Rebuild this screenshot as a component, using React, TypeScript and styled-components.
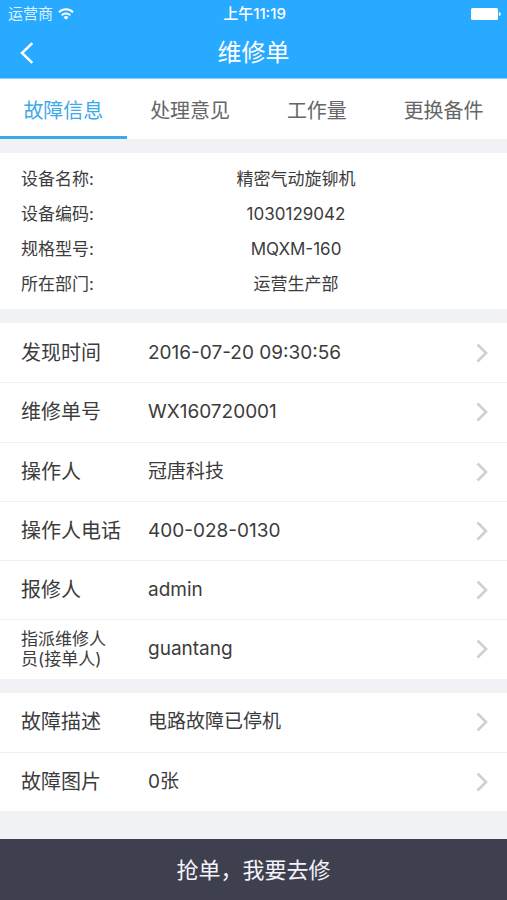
import React, { useState } from "react";
import styled, { createGlobalStyle } from "styled-components";

const GlobalStyle = createGlobalStyle`
  * { box-sizing: border-box; }
  body {
    margin: 0;
    background: #f0f2f5;
    color: #3c3c3c;
    font-family: Inter, "Noto Sans CJK SC", sans-serif;
  }
  button {
    margin: 0;
    padding: 0;
    border: 0;
    background: none;
    color: inherit;
    font: inherit;
    text-align: left;
    cursor: pointer;
  }
`;

const Page = styled.div`
  display: flex;
  flex-direction: column;
  gap: 14px;
  min-height: 100vh;
`;

const Top = styled.div``;

const Header = styled.header`
  background: #27aaff;
  color: #fff;
  border-bottom: 1px solid #7fd3ff;
`;

const StatusBar = styled.div`
  display: grid;
  grid-template-columns: 1fr auto 1fr;
  align-items: center;
  height: 28px;
  padding: 0 6px 0 8px;
  font-size: 15px;
  line-height: 20px;
`;

const Carrier = styled.div`
  display: flex;
  align-items: center;
  gap: 5px;
  color: #dff2ff;
`;

const Clock = styled.time`
  font-weight: 500;
`;

const Battery = styled.svg`
  justify-self: end;
`;

const NavBar = styled.div`
  display: grid;
  grid-template-columns: 60px 1fr 60px;
  align-items: center;
  height: 50px;
`;

const BackButton = styled.button`
  display: flex;
  align-items: center;
  height: 48px;
  padding-left: 20px;
`;

const Title = styled.h1`
  margin: 0;
  font-size: 24px;
  line-height: 48px;
  font-weight: 400;
  text-align: center;
`;

const Tabs = styled.div`
  display: grid;
  grid-template-columns: repeat(4, 1fr);
  background: #fff;
`;

const Tab = styled.button<{ $active: boolean }>`
  height: 60px;
  padding-top: 4px;
  border-bottom: 3px solid ${(p) => (p.$active ? "#3ba9ea" : "transparent")};
  color: ${(p) => (p.$active ? "#3ba9ea" : "#666")};
  font-size: 20px;
  text-align: center;
`;

const Info = styled.dl`
  margin: 0;
  padding: 9px 20px 7px 21px;
  background: #fff;
  font-size: 17px;
  line-height: 35px;
`;

const InfoRow = styled.div`
  display: grid;
  grid-template-columns: 84px 1fr;
`;

const InfoLabel = styled.dt`
  white-space: nowrap;
`;

const InfoValue = styled.dd`
  margin: 0;
  text-align: center;
`;

const List = styled.ul<{ $rows: number }>`
  display: flex;
  flex: ${(p) => p.$rows} 0 auto;
  flex-direction: column;
  margin: 0;
  padding: 0;
  background: #fff;
  list-style: none;
`;

const Item = styled.li`
  display: flex;
  flex: 1 0 56px;

  & + & {
    border-top: 1px solid #eeeff0;
  }
`;

const ItemButton = styled.button`
  display: grid;
  grid-template-columns: 115px 1fr 12px;
  column-gap: 12px;
  align-items: center;
  width: 100%;
  padding: 0 19px 0 21px;
`;

const ItemLabel = styled.span<{ $small?: boolean }>`
  max-width: ${(p) => (p.$small ? "90px" : "none")};
  font-size: ${(p) => (p.$small ? "17px" : "20px")};
  line-height: 20px;
`;

const ItemValue = styled.span`
  font-size: 19px;
  line-height: 24px;
`;

const Footer = styled.footer`
  margin-top: 14px;
`;

const GrabButton = styled.button`
  display: block;
  width: 100%;
  height: 61px;
  padding-bottom: 4px;
  background: #3f404f;
  color: #f3f3fb;
  font-size: 22px;
  text-align: center;
`;

const tabs = ["故障信息", "处理意见", "工作量", "更换备件"];

const device = [
  ["设备名称:", "精密气动旋铆机"],
  ["设备编码:", "1030129042"],
  ["规格型号:", "MQXM-160"],
  ["所在部门:", "运营生产部"],
];

type Field = { label: string; value: string; small?: boolean };

const orderFields: Field[] = [
  { label: "发现时间", value: "2016-07-20 09:30:56" },
  { label: "维修单号", value: "WX160720001" },
  { label: "操作人", value: "冠唐科技" },
  { label: "操作人电话", value: "400-028-0130" },
  { label: "报修人", value: "admin" },
  { label: "指派维修人员(接单人)", value: "guantang", small: true },
];

const faultFields: Field[] = [
  { label: "故障描述", value: "电路故障已停机" },
  { label: "故障图片", value: "0张" },
];

function Chevron() {
  return (
    <svg width="12" height="20" viewBox="0 0 12 20" fill="none" aria-hidden="true">
      <path d="M1.5 1.5 10 10l-8.5 8.5" stroke="#cfcfd0" strokeWidth="2.6" />
    </svg>
  );
}

function FieldList({ fields }: { fields: Field[] }) {
  return (
    <List $rows={fields.length}>
      {fields.map((f) => (
        <Item key={f.label}>
          <ItemButton type="button">
            <ItemLabel $small={f.small}>{f.label}</ItemLabel>
            <ItemValue>{f.value}</ItemValue>
            <Chevron />
          </ItemButton>
        </Item>
      ))}
    </List>
  );
}

export default function App() {
  const [active, setActive] = useState(0);
  return (
    <>
      <GlobalStyle />
      <Page>
        <Top>
          <Header>
            <StatusBar>
              <Carrier>
                运营商
                <svg width="16" height="12" viewBox="0 0 16 12" fill="none" aria-hidden="true">
                  <path d="M1 4.2a10 10 0 0 1 14 0" stroke="#fff" strokeWidth="2" />
                  <path d="M3.7 7.2a6.2 6.2 0 0 1 8.6 0" stroke="#fff" strokeWidth="1.9" />
                  <path d="M8 11.8 5.5 9.2a3.6 3.6 0 0 1 5 0z" fill="#fff" />
                </svg>
              </Carrier>
              <Clock>上午11:19</Clock>
              <Battery width="30" height="12" viewBox="0 0 30 12" aria-hidden="true">
                <rect width="27" height="12" rx="1.5" fill="#fff" />
                <path d="M28 4c1.2.3 1.7 1 1.7 2S29.2 7.7 28 8z" fill="#fff" />
              </Battery>
            </StatusBar>
            <NavBar>
              <BackButton type="button" aria-label="返回">
                <svg width="14" height="22" viewBox="0 0 14 22" fill="none" aria-hidden="true">
                  <path d="M12.3 1.2 2 11l10.3 9.8" stroke="#fff" strokeWidth="2.5" />
                </svg>
              </BackButton>
              <Title>维修单</Title>
            </NavBar>
          </Header>
          <Tabs role="tablist">
            {tabs.map((t, i) => (
              <Tab
                key={t}
                type="button"
                role="tab"
                aria-selected={i === active}
                $active={i === active}
                onClick={() => setActive(i)}
              >
                {t}
              </Tab>
            ))}
          </Tabs>
        </Top>
        <Info>
          {device.map(([label, value]) => (
            <InfoRow key={label}>
              <InfoLabel>{label}</InfoLabel>
              <InfoValue>{value}</InfoValue>
            </InfoRow>
          ))}
        </Info>
        <FieldList fields={orderFields} />
        <FieldList fields={faultFields} />
        <Footer>
          <GrabButton type="button">抢单，我要去修</GrabButton>
        </Footer>
      </Page>
    </>
  );
}
